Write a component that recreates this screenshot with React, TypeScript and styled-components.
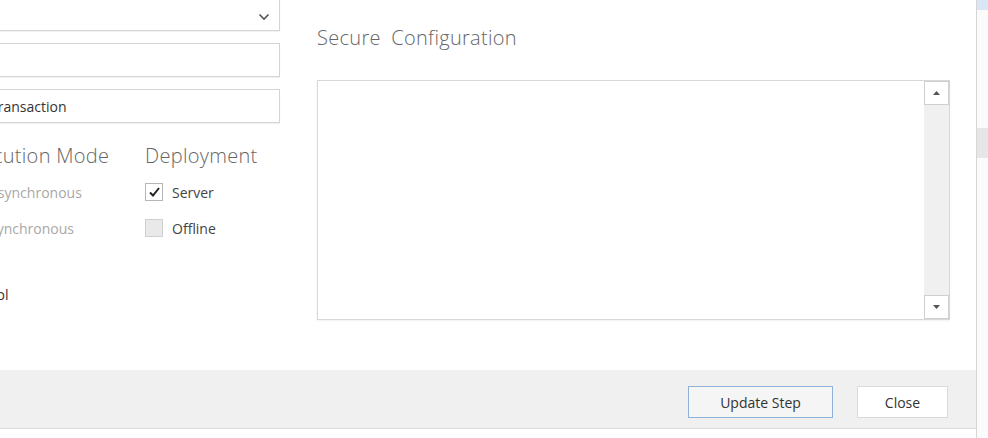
import React from "react";
import styled, { createGlobalStyle } from "styled-components";

const Global = createGlobalStyle`
  html, body { margin: 0; padding: 0; background: #ffffff; overflow: hidden; }
  body { font-family: "Open Sans", "Noto Sans", "Liberation Sans", sans-serif; }
  * { box-sizing: border-box; }
`;

const Page = styled.div`
  display: flex;
  width: 988px;
  height: 438px;
  overflow: hidden;
`;

const Dialog = styled.div`
  width: 977px;
  height: 438px;
  display: flex;
  flex-direction: column;
  border-right: 1px solid #d6d6d6;
  background: #ffffff;
  overflow: hidden;
`;

const Side = styled.div`
  flex: 1;
  display: flex;
  flex-direction: column;
  background: #fbfbfb;
`;

const SideBlock = styled.div<{ $h: number; $bg: string }>`
  height: ${(p) => p.$h}px;
  background: ${(p) => p.$bg};
  flex-shrink: 0;
`;

const Body = styled.div`
  height: 370px;
  display: flex;
  gap: 37px;
`;

const LeftCol = styled.div`
  width: 320px;
  margin-left: -40px;
  margin-top: -3px;
  display: flex;
  flex-direction: column;
  flex-shrink: 0;
`;

const Field = styled.div<{ $mt?: number }>`
  height: 34px;
  margin-top: ${(p) => p.$mt ?? 0}px;
  border: 1px solid #d4d4d4;
  box-shadow: 0 1px 1px rgba(0, 0, 0, 0.05);
  background: #fff;
  display: flex;
  align-items: center;
  justify-content: space-between;
  padding: 0 9px 0 29px;
  font-size: 14px;
  color: #333;
`;

const Chevron = styled.svg`
  width: 12px;
  height: 8px;
  margin-top: 6px;
`;

const Groups = styled.div`
  display: flex;
  margin-top: 21px;
`;

const Group = styled.div<{ $w: number }>`
  width: ${(p) => p.$w}px;
  display: flex;
  flex-direction: column;
`;

const GroupTitle = styled.div`
  font-size: 20px;
  font-weight: 300;
  color: #666;
  line-height: 24px;
  height: 24px;
  white-space: nowrap;
  letter-spacing: 0.3px;
`;

const OptionRow = styled.div<{ $mt: number }>`
  display: flex;
  align-items: center;
  gap: 9px;
  height: 18px;
  margin-top: ${(p) => p.$mt}px;
  white-space: nowrap;
`;

const Radio = styled.span`
  width: 14px;
  height: 14px;
  border-radius: 50%;
  border: 1px solid #ccc;
  margin-right: 6px;
  flex-shrink: 0;
`;

const OptionText = styled.span<{ $disabled?: boolean }>`
  font-size: 14px;
  color: ${(p) => (p.$disabled ? "#a8a8a8" : "#444")};
`;

const Box = styled.span<{ $checked?: boolean }>`
  width: 18px;
  height: 18px;
  border: 1px solid ${(p) => (p.$checked ? "#b5b5b5" : "#cfcfcf")};
  background: ${(p) => (p.$checked ? "#fff" : "#e9e9e9")};
  display: flex;
  align-items: center;
  justify-content: center;
  flex-shrink: 0;
`;

const LoneLabel = styled.div`
  margin-top: 48px;
  margin-left: 0;
  font-size: 14px;
  color: #333;
`;

const RightCol = styled.div`
  width: 633px;
  display: flex;
  flex-direction: column;
  padding-top: 25px;
`;

const Heading = styled.div`
  font-size: 20px;
  font-weight: 300;
  color: #666;
  line-height: 26px;
  word-spacing: 5px;
  letter-spacing: 0.3px;
`;

const TextArea = styled.div`
  margin-top: 29px;
  height: 240px;
  border: 1px solid #d8d8d8;
  box-shadow: 0 1px 2px rgba(0, 0, 0, 0.06);
  display: flex;
  justify-content: flex-end;
  background: #fff;
`;

const ScrollBar = styled.div`
  width: 25px;
  display: flex;
  flex-direction: column;
  justify-content: space-between;
  background: #f0f0f0;
`;

const ScrollBtn = styled.div`
  height: 24px;
  border: 1px solid #cfcfcf;
  background: #fff;
  display: flex;
  align-items: center;
  justify-content: center;
`;

const Footer = styled.div`
  height: 59px;
  background: #f0f0f0;
  border-bottom: 1px solid #dcdcdc;
  display: flex;
  align-items: center;
  justify-content: flex-end;
  gap: 24px;
  padding: 0 28px 0 0;
  flex-shrink: 0;
`;

const Button = styled.button<{ $w: number; $primary?: boolean }>`
  width: ${(p) => p.$w}px;
  height: 32px;
  font-family: inherit;
  font-size: 14px;
  color: #333;
  background: ${(p) => (p.$primary ? "#f5f5f5" : "#ffffff")};
  border: 1px solid ${(p) => (p.$primary ? "#8fb2d9" : "#dadada")};
  padding: 0;
  margin-top: 6px;
`;

const Check = () => (
  <svg width="13" height="12" viewBox="0 0 13 12">
    <path d="M2 6.5 L5 9.5 L11 2" fill="none" stroke="#222" strokeWidth="2" />
  </svg>
);

const Arrow = ({ up }: { up?: boolean }) => (
  <svg width="7" height="4" viewBox="0 0 7 4">
    <path d={up ? "M0 4 L3.5 0 L7 4 Z" : "M0 0 L3.5 4 L7 0 Z"} fill="#555" />
  </svg>
);

export default function App() {
  return (
    <Page>
      <Global />
      <Dialog>
        <Body>
          <LeftCol>
            <Field>
              <span />
              <Chevron viewBox="0 0 12 8">
                <path d="M1.5 1.5 L6 6 L10.5 1.5" fill="none" stroke="#555" strokeWidth="1.6" />
              </Chevron>
            </Field>
            <Field $mt={12} />
            <Field $mt={12}>Transaction</Field>
            <Groups>
              <Group $w={185}>
                <GroupTitle>Execution Mode</GroupTitle>
                <OptionRow $mt={15}>
                  <Radio />
                  <OptionText $disabled>Asynchronous</OptionText>
                </OptionRow>
                <OptionRow $mt={18}>
                  <Radio />
                  <OptionText $disabled>Synchronous</OptionText>
                </OptionRow>
              </Group>
              <Group $w={135}>
                <GroupTitle>Deployment</GroupTitle>
                <OptionRow $mt={15}>
                  <Box $checked>
                    <Check />
                  </Box>
                  <OptionText>Server</OptionText>
                </OptionRow>
                <OptionRow $mt={18}>
                  <Box />
                  <OptionText>Offline</OptionText>
                </OptionRow>
              </Group>
            </Groups>
            <LoneLabel>Control</LoneLabel>
          </LeftCol>
          <RightCol>
            <Heading>Secure Configuration</Heading>
            <TextArea>
              <ScrollBar>
                <ScrollBtn>
                  <Arrow up />
                </ScrollBtn>
                <ScrollBtn>
                  <Arrow />
                </ScrollBtn>
              </ScrollBar>
            </TextArea>
          </RightCol>
        </Body>
        <Footer>
          <Button $w={145} $primary>
            Update Step
          </Button>
          <Button $w={91}>Close</Button>
        </Footer>
      </Dialog>
      <Side>
        <SideBlock $h={10} $bg="#d9e6f5" />
        <SideBlock $h={118} $bg="#fbfbfb" />
        <SideBlock $h={30} $bg="#e6e6e6" />
      </Side>
    </Page>
  );
}
